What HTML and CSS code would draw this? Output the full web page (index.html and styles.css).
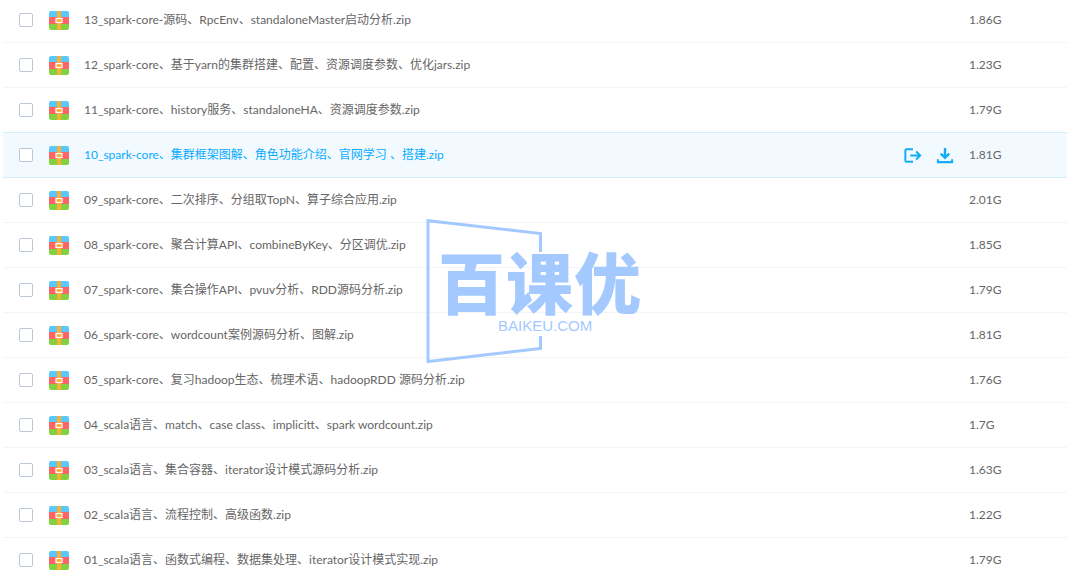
FILE: index.html
```html
<!DOCTYPE html>
<html lang="en">
<head>
  <meta charset="UTF-8">
  <meta name="viewport" content="width=device-width, initial-scale=1.0">
  <title>File list</title>
  <link rel="stylesheet" href="styles.css">
</head>
<body>
  <svg class="defs" width="0" height="0">
    <symbol id="rar" viewBox="0 0 20 19">
      <path d="M2 0h16a2 2 0 0 1 2 2v4H0V2a2 2 0 0 1 2-2z" fill="#5ac8fa"/>
      <rect y="6" width="20" height="7" fill="#ff6464"/>
      <path d="M0 13h20v4a2 2 0 0 1-2 2H2a2 2 0 0 1-2-2z" fill="#82d140"/>
      <rect x="8" width="4" height="19" fill="#fbb034"/>
      <rect x="7" y="7.5" width="6" height="4" fill="#fbb034" stroke="#fff" stroke-width="1.2"/>
    </symbol>
  </svg>

  <ul class="file-list">
    <li class="file-row">
      <span class="check"></span>
      <svg class="file-icon"><use href="#rar"/></svg>
      <span class="file-name">13_spark-core-源码、RpcEnv、standaloneMaster启动分析.zip</span>
      <span class="file-size">1.86G</span>
    </li>
    <li class="file-row">
      <span class="check"></span>
      <svg class="file-icon"><use href="#rar"/></svg>
      <span class="file-name">12_spark-core、基于yarn的集群搭建、配置、资源调度参数、优化jars.zip</span>
      <span class="file-size">1.23G</span>
    </li>
    <li class="file-row">
      <span class="check"></span>
      <svg class="file-icon"><use href="#rar"/></svg>
      <span class="file-name">11_spark-core、history服务、standaloneHA、资源调度参数.zip</span>
      <span class="file-size">1.79G</span>
    </li>
    <li class="file-row active">
      <span class="check"></span>
      <svg class="file-icon"><use href="#rar"/></svg>
      <span class="file-name">10_spark-core、集群框架图解、角色功能介绍、官网学习 、搭建.zip</span>
      <span class="row-actions">
        <svg class="action" viewBox="0 0 20 18" fill="none" stroke="#12adf5" stroke-width="2.2">
          <path d="M10 2H3a1.5 1.5 0 0 0-1.5 1.5v11A1.5 1.5 0 0 0 3 16h7"/>
          <path d="M7 9h11M13.5 4.5L18 9l-4.500 4.500"/>
        </svg>
        <svg class="action" viewBox="0 0 18 18" fill="none" stroke="#12adf5" stroke-width="2.2">
          <path d="M9 1v10M4.500 7L9 11.500 13.500 7" stroke-width="2.6"/>
          <path d="M1.500 13v3h15v-3"/>
        </svg>
      </span>
      <span class="file-size">1.81G</span>
    </li>
    <li class="file-row">
      <span class="check"></span>
      <svg class="file-icon"><use href="#rar"/></svg>
      <span class="file-name">09_spark-core、二次排序、分组取TopN、算子综合应用.zip</span>
      <span class="file-size">2.01G</span>
    </li>
    <li class="file-row">
      <span class="check"></span>
      <svg class="file-icon"><use href="#rar"/></svg>
      <span class="file-name">08_spark-core、聚合计算API、combineByKey、分区调优.zip</span>
      <span class="file-size">1.85G</span>
    </li>
    <li class="file-row">
      <span class="check"></span>
      <svg class="file-icon"><use href="#rar"/></svg>
      <span class="file-name">07_spark-core、集合操作API、pvuv分析、RDD源码分析.zip</span>
      <span class="file-size">1.79G</span>
    </li>
    <li class="file-row">
      <span class="check"></span>
      <svg class="file-icon"><use href="#rar"/></svg>
      <span class="file-name">06_spark-core、wordcount案例源码分析、图解.zip</span>
      <span class="file-size">1.81G</span>
    </li>
    <li class="file-row">
      <span class="check"></span>
      <svg class="file-icon"><use href="#rar"/></svg>
      <span class="file-name">05_spark-core、复习hadoop生态、梳理术语、hadoopRDD 源码分析.zip</span>
      <span class="file-size">1.76G</span>
    </li>
    <li class="file-row">
      <span class="check"></span>
      <svg class="file-icon"><use href="#rar"/></svg>
      <span class="file-name">04_scala语言、match、case class、implicitt、spark wordcount.zip</span>
      <span class="file-size">1.7G</span>
    </li>
    <li class="file-row">
      <span class="check"></span>
      <svg class="file-icon"><use href="#rar"/></svg>
      <span class="file-name">03_scala语言、集合容器、iterator设计模式源码分析.zip</span>
      <span class="file-size">1.63G</span>
    </li>
    <li class="file-row">
      <span class="check"></span>
      <svg class="file-icon"><use href="#rar"/></svg>
      <span class="file-name">02_scala语言、流程控制、高级函数.zip</span>
      <span class="file-size">1.22G</span>
    </li>
    <li class="file-row">
      <span class="check"></span>
      <svg class="file-icon"><use href="#rar"/></svg>
      <span class="file-name">01_scala语言、函数式编程、数据集处理、iterator设计模式实现.zip</span>
      <span class="file-size">1.79G</span>
    </li>
  </ul>

  <div class="watermark">
    <svg class="wm-frame" viewBox="0 0 116 145" fill="none" stroke="#a3c9ff" stroke-width="3">
      <path d="M114.500 33V14.500L2 1.700V142.500L114.500 129.500V117"/>
    </svg>
    <div class="wm-title">百课优</div>
    <div class="wm-sub">BAIKEU.COM</div>
  </div>
</body>
</html>
```

FILE: styles.css
```css
html, body {
  height: 100%;
  overflow: hidden;
}

body {
  margin: 0;
  background: #fff;
  color: #666;
  font-family: Lato, "Noto Sans CJK SC", sans-serif;
  font-size: 12px;
}

.defs {
  position: absolute;
}

.file-list {
  list-style: none;
  margin: -2px 0 0 3px;
  padding: 0;
}

.file-row {
  display: flex;
  align-items: center;
  height: 44px;
  line-height: 20px;
  border-bottom: 1px solid #f2f4f8;
}

.file-row.active {
  background: #f2faff;
  border-bottom-color: #d3eefb;
  box-shadow: 0 -1px 0 #d3eefb;
  color: #09aaff;
}

.check {
  flex: none;
  width: 12px;
  height: 12px;
  margin-left: 16px;
  border: 1px solid #bcc7d6;
  border-radius: 2px;
  background: #fff;
}

.file-icon {
  flex: none;
  width: 20px;
  height: 19px;
  margin-left: 16px;
}

.file-name {
  flex: 1;
  margin-left: 15px;
  white-space: nowrap;
}

.row-actions {
  display: flex;
  align-items: center;
  gap: 14px;
  margin-right: 15px;
}

.action {
  width: 18px;
  height: 17px;
}

.file-size {
  flex: none;
  width: 98px;
  color: #666;
}

.watermark {
  position: absolute;
  left: 426px;
  top: 219px;
  width: 220px;
  height: 145px;
}

.wm-frame {
  position: absolute;
  left: 0;
  top: 0;
  width: 116px;
  height: 145px;
}

.wm-title {
  position: absolute;
  left: 12px;
  top: 28px;
  font-family: "Noto Sans CJK SC", sans-serif;
  font-size: 67px;
  font-weight: 900;
  line-height: 66px;
  letter-spacing: 1px;
  white-space: nowrap;
  color: #a3c9ff;
}

.wm-sub {
  position: absolute;
  left: 72px;
  top: 98px;
  font-family: "Liberation Sans", sans-serif;
  font-size: 15px;
  line-height: 17px;
  color: #a3c9ff;
}
```
